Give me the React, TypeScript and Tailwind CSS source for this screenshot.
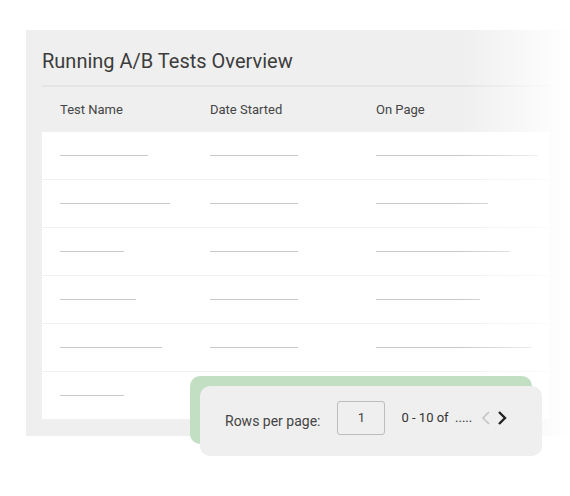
const rows = [
  [88, 88, 162],
  [110, 88, 112],
  [64, 88, 134],
  [76, 88, 104],
  [102, 88, 156],
  [64, 0, 0],
]

export default function App() {
  return (
    <div className="relative w-[570px] h-[496px] bg-white overflow-hidden" style={{ fontFamily: "Roboto, 'Liberation Sans', sans-serif" }}>
      <div className="relative mt-[30px] ml-[26px] h-[406px] bg-[#efefef] pl-4 overflow-hidden">
        <h1 className="pt-[16px] h-[55px] text-[20px] text-[#3c3c3c]">Running A/B Tests Overview</h1>
        <div className="w-[508px] border-t-2 border-[#e4e4e4]">
          <div className="flex h-[45px] items-center text-[13px] text-[#444] bg-[#efefef]">
            <span className="w-[168px] pl-[18px]">Test Name</span>
            <span className="w-[166px]">Date Started</span>
            <span>On Page</span>
          </div>
          {rows.map((r, i) => (
            <div key={i} className="flex h-[48px] items-center bg-white border-b border-[#f0f0f0]">
              <div className="w-[168px] pl-[18px]"><div className="h-[1.5px] bg-[#c9c9c9]" style={{ width: r[0] }} /></div>
              <div className="w-[166px]"><div className="h-[1.5px] bg-[#c9c9c9]" style={{ width: r[1] }} /></div>
              <div><div className="h-[1.5px] bg-[#c9c9c9]" style={{ width: r[2] }} /></div>
            </div>
          ))}
        </div>
        <div className="absolute top-0 right-0 w-[110px] h-full bg-gradient-to-r from-transparent to-white" />
      </div>
      <div className="absolute left-[190px] top-[376px] w-[342px] h-[68px] rounded-[10px] bg-[#c2dfc3]" />
      <div className="absolute left-[200px] top-[386px] w-[342px] h-[70px] rounded-[10px] bg-[#efefef] flex items-center pl-[25px] text-[#444]">
        <span className="text-[14px] mt-[1px]">Rows per page:</span>
        <div className="ml-[17px] w-[48px] h-[34px] border border-[#bdbdbd] rounded-[3px] flex items-center justify-center text-[13px] -mt-[7px]">1</div>
        <span className="ml-[16px] text-[13px] -mt-[7px] text-[#333]">0 - 10 of&nbsp; .....</span>
        <span className="ml-[9px] -mt-[7px] flex items-center gap-[6px]">
          <svg width="10" height="16" viewBox="0 0 10 16"><path d="M8 2 L2 8 L8 14" fill="none" stroke="#c4c4c4" strokeWidth="1.6" /></svg>
          <svg width="10" height="16" viewBox="0 0 10 16"><path d="M2 2 L8 8 L2 14" fill="none" stroke="#222" strokeWidth="2.4" /></svg>
        </span>
      </div>
    </div>
  )
}
